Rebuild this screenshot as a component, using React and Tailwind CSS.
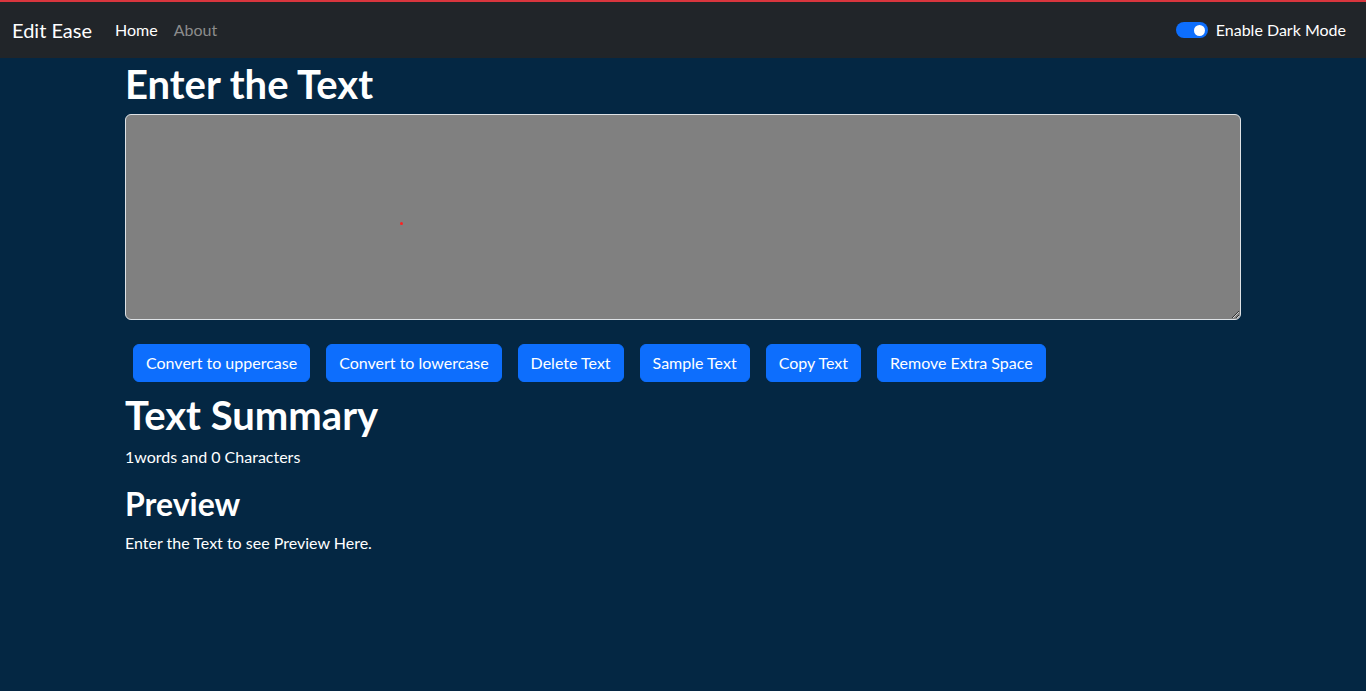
import { useState } from "react";

const buttons = [
  "Convert to uppercase",
  "Convert to lowercase",
  "Delete Text",
  "Sample Text",
  "Copy Text",
  "Remove Extra Space",
];

function App() {
  const [text, setText] = useState("");
  return (
    <div className="min-h-screen bg-[#042743] text-white font-['Lato',sans-serif]">
      <div className="h-[2px] bg-[#d9363e]" />
      <nav className="h-[56px] bg-[#212529] flex items-center px-3">
        <a className="text-[20px] text-white mr-[15px] leading-[30px]">Edit Ease</a>
        <div className="flex">
          <a className="px-2 text-white text-base">Home</a>
          <a className="px-2 text-[#8c8c8c] text-base">About</a>
        </div>
        <div className="ml-auto flex items-center mr-2">
          <span className="w-8 h-4 rounded-full bg-[#0d6efd] flex items-center justify-end pr-[3px]">
            <span className="w-[11px] h-[11px] rounded-full bg-white" />
          </span>
          <label className="ml-2 text-base">Enable Dark Mode</label>
        </div>
      </nav>
      <div className="w-[1140px] mx-auto px-3">
        <h1 className="text-[40px] leading-[48px] font-bold pt-[2px] mb-[6px]">Enter the Text</h1>
        <div className="relative">
          <textarea
            value={text}
            onChange={e => setText(e.target.value)}
            className="block w-full h-[206px] bg-[#808080] text-white border border-[#dee2e6] rounded-md px-3 py-1.5 outline-none"
          />
          <span className="absolute left-[275px] top-[108px] w-[3px] h-[3px] rounded-full bg-[#ff2020]" />
        </div>
        <div className="flex gap-4 mt-6 px-2">
          {buttons.map(b => (
            <button
              key={b}
              className="h-[38px] px-3 bg-[#0d6efd] rounded-md text-base text-white border border-[#0d6efd]">
              {b}
            </button>
          ))}
        </div>
        <h1 className="text-[40px] leading-[48px] font-bold mt-[9px] mb-[6px]">Text Summary</h1>
        <p className="text-base leading-6 mb-4">1words and 0 Characters</p>
        <h2 className="text-[32px] leading-[38px] font-bold mb-2">Preview</h2>
        <p className="text-base leading-6">Enter the Text to see Preview Here.</p>
      </div>
    </div>
  );
}

export default App;
